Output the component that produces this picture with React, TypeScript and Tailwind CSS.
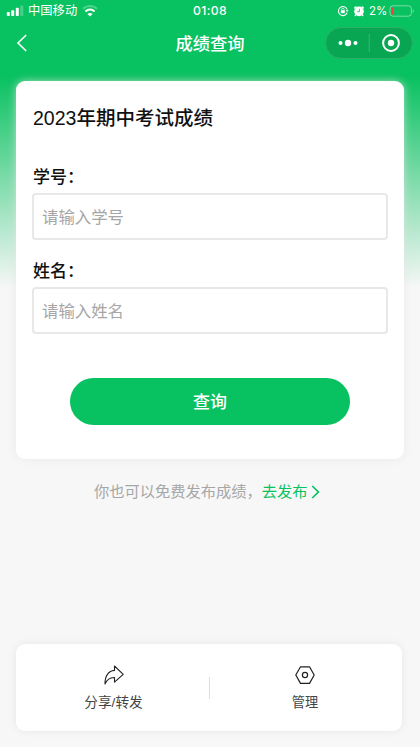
interface FieldType {
    label: string;
    placeholder: string;
}

export default function App() {
    return <div className="h-[747px] w-[420px] overflow-hidden flex flex-col bg-[#f7f7f7] bg-[linear-gradient(to_bottom,#08c160_0px,#08c160_76px,#f7f7f7_288px)] font-['Liberation_Sans','Noto_Sans_CJK_SC',sans-serif]">
        <StatusBar />
        <NavBar />
        <div className="mt-[16px] ml-4 w-[388px] h-[378px] shrink-0 rounded-[9px] bg-white shadow-[0_0_9px_rgba(228,228,228,0.7)] px-4 flex flex-col">
            <div className="mt-[22px] h-[30px] leading-[30px] pl-px text-[19.5px] font-medium text-[#111] whitespace-nowrap">2023年期中考试成绩</div>
            <div className="mt-[33px]">
                <Field label="学号：" placeholder="请输入学号" />
            </div>
            <div className="mt-[20px]">
                <Field label="姓名：" placeholder="请输入姓名" />
            </div>
            <button className="mt-[44px] h-[47px] w-[280px] self-center rounded-full bg-[#08c160] pt-[2px] text-white text-[17px] font-medium">
                查询
            </button>
        </div>
        <div className="mt-[21px] h-6 flex items-center pl-[94px] text-[15.25px] text-[#a6a6a6] whitespace-nowrap">
            <span>你也可以免费发布成绩，</span>
            <span className="text-[#08c160]">去发布</span>
            <svg className="ml-[3px]" width="9" height="14" viewBox="0 0 9 14" fill="none" stroke="#08c160" strokeWidth="1.7">
                <path d="M1.2 1L7.4 7L1.2 13" />
            </svg>
        </div>
        <div className="mt-auto mb-4 ml-4 w-[386px] h-[87px] shrink-0 rounded-[9px] bg-white shadow-[0_0_9px_rgba(0,0,0,0.07)] flex items-center">
            <div className="w-[193px] pt-[2px] pl-[2px] flex flex-col items-center">
                <ShareIcon />
                <div className="mt-[8px] h-5 leading-5 text-[13.7px] text-[#444]">分享/转发</div>
            </div>
            <div className="w-px h-[22px] bg-[#dedede]"></div>
            <div className="w-[190px] pt-[2px] flex flex-col items-center">
                <ManageIcon />
                <div className="mt-[8px] h-5 leading-5 text-[13.2px] text-[#444]">管理</div>
            </div>
        </div>
    </div>
}

function Field({ label, placeholder }: FieldType) {
    return <label className="block">
        <div className="h-[24px] leading-[24px] pl-px text-[17px] font-medium text-[#111]">{label}</div>
        <input
            className="mt-[3px] block h-[47px] w-[356px] rounded-[4px] border-2 border-[#e8e8e8] px-[8px] pt-[2px] text-[16.4px] placeholder:text-[#a6a6a6] outline-none"
            placeholder={placeholder}
        />
    </label>
}

function StatusBar() {
    return <div className="h-[21px] shrink-0 flex items-center text-white">
        <div className="w-[140px] pl-[6px] flex items-center">
            <svg width="19" height="12" viewBox="0 0 19 12" fill="white">
                <rect x="0.8" y="7" width="3" height="4" rx="0.8" />
                <rect x="5.2" y="5.3" width="3" height="5.7" rx="0.8" />
                <rect x="9.8" y="2.8" width="3" height="8.2" rx="0.8" />
                <rect x="14.3" y="0.5" width="3" height="10.5" rx="0.8" opacity="0.25" />
            </svg>
            <div className="ml-[3px] pt-px text-[12.3px] leading-5 whitespace-nowrap">中国移动</div>
            <svg className="ml-[5px]" width="16" height="12" viewBox="0 0 16 12" fill="none" stroke="white" strokeWidth="2">
                <path d="M1 3.8C4.8 0.2 11.2 0.2 15 3.8" opacity="0.3" />
                <path d="M3.4 6.4C6 4 10 4 12.6 6.4" />
                <path d="M8 11.5L5.4 8.9C6.9 7.6 9.1 7.6 10.6 8.9Z" fill="white" stroke="none" />
            </svg>
        </div>
        <div className="w-[140px] pt-[2px] text-center font-['Inter','Liberation_Sans',sans-serif] text-[12.2px] font-medium tracking-[0.4px]">01:08</div>
        <div className="w-[140px] pl-[57px] flex items-center">
            <svg width="12" height="12" viewBox="0 0 12 12" fill="none" stroke="white" strokeWidth="1.1">
                <path d="M10.1 7.8A4.5 4.5 0 1 1 10.2 4.6" />
                <path d="M8.6 5.2H11.6L10.2 7Z" fill="white" stroke="none" />
                <rect x="3.8" y="5.2" width="4" height="3" fill="white" stroke="none" />
                <path d="M4.6 5.3V4.4A1.2 1.2 0 0 1 7 4.4V5.3" strokeWidth="0.8" />
            </svg>
            <svg className="ml-[4px]" width="12" height="12" viewBox="0 0 12 12" fill="white">
                <circle cx="6" cy="6.4" r="4.8" />
                <path d="M1.4 3.4L3.4 1.5M10.6 3.4L8.6 1.5M3 9.6L2 11M9 9.6L10 11" stroke="white" strokeWidth="1.5" />
                <path d="M6.4 3.8V6.7H4.2" fill="none" stroke="#08c160" strokeWidth="0.8" />
            </svg>
            <div className="ml-[4px] pt-[2px] w-[19px] font-['Inter','Liberation_Sans',sans-serif] text-[11.5px]">2%</div>
            <svg className="ml-[1px]" width="26" height="12" viewBox="0 0 26 12" fill="none">
                <rect x="1" y="0.8" width="21.4" height="10.4" rx="3" stroke="white" strokeOpacity="0.45" />
                <rect x="2.5" y="2.4" width="1.7" height="7.2" rx="0.6" fill="#f43c3c" />
                <path d="M23.8 4.2C25.2 4.8 25.2 7.2 23.8 7.8Z" fill="white" opacity="0.45" />
            </svg>
        </div>
    </div>
}

function NavBar() {
    return <div className="h-[44px] shrink-0 flex items-center text-white">
        <div className="w-[95px] pl-[16px]">
            <svg width="12" height="18" viewBox="0 0 12 18" fill="none" stroke="white" strokeWidth="1.6">
                <path d="M10.2 1L2 9L10.2 17" />
            </svg>
        </div>
        <div className="w-[230px] pt-[3px] text-center text-[17.3px] font-medium">成绩查询</div>
        <div className="h-8 w-[88px] rounded-full bg-[#08a652] border border-[#2cb168] flex items-center">
            <svg width="86" height="30" viewBox="0 0 86 30" fill="white">
                <circle cx="14.5" cy="15" r="2" />
                <circle cx="22" cy="15" r="3.2" />
                <circle cx="29.5" cy="15" r="2" />
                <path d="M43.2 6V24" stroke="white" strokeOpacity="0.2" />
                <circle cx="65" cy="15" r="7.9" fill="none" stroke="white" strokeWidth="2" />
                <circle cx="65" cy="15" r="3.2" />
            </svg>
        </div>
    </div>
}

function ShareIcon() {
    return <svg width="20" height="20" viewBox="0 0 20 20" fill="none" stroke="#222" strokeWidth="1.1" strokeLinejoin="round">
        <path d="M10.5 1L19.2 9.3L10.5 17.2V12.5C6 12.3 3 14.5 1 19C0.8 11 4.5 5.8 10.5 5.4Z" />
    </svg>
}

function ManageIcon() {
    return <svg width="20" height="20" viewBox="0 0 20 20" fill="none" stroke="#222" strokeWidth="1.2" strokeLinejoin="round">
        <path d="M5.5 1.8H14.5L19.2 10L14.5 18.4H5.5L0.8 10Z" />
        <circle cx="10" cy="10" r="2.6" />
    </svg>
}
